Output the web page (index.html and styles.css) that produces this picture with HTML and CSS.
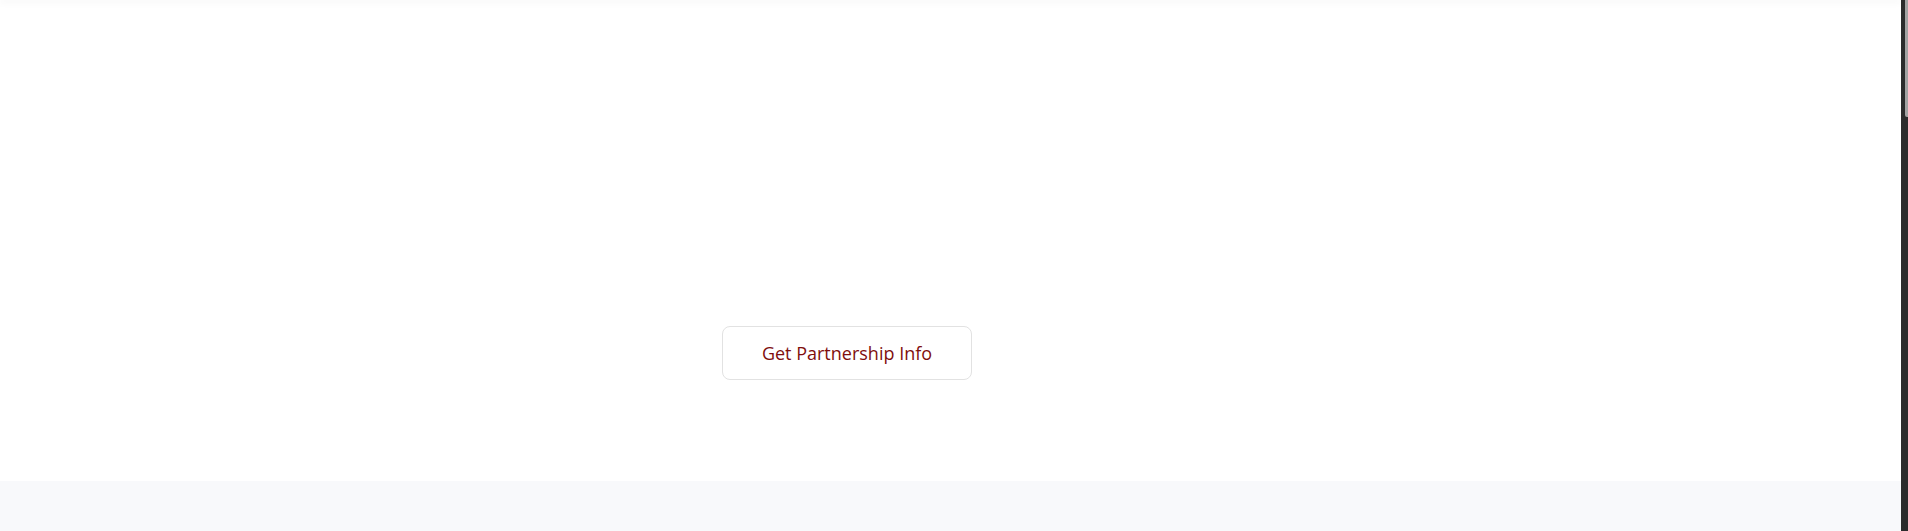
FILE: index.html
```html
<!DOCTYPE html>
<html lang="en">
<head>
<meta charset="utf-8">
<title>Partnership</title>
<link rel="stylesheet" href="styles.css">
</head>
<body>
<div class="frame">
  <div class="page">
    <div class="top-shadow"></div>
    <section class="hero">
      <div class="cta-row">
        <a class="cta" href="#">Get Partnership Info</a>
      </div>
    </section>
    <section class="next"></section>
  </div>
  <div class="scrollbar"><div class="thumb"></div></div>
</div>
</body>
</html>
```
FILE: styles.css
```css
* { box-sizing: border-box; }
html, body { margin: 0; padding: 0; height: 100%; overflow: hidden; }
body { font-family: "Open Sans", "Liberation Sans", sans-serif; background: #fff; }
.frame { display: flex; height: 531px; width: 1908px; }
.page { flex: 1; display: flex; flex-direction: column; background: #fff; }
.top-shadow { height: 0; box-shadow: 0 1px 7px 1px rgba(0,0,0,0.08); position: relative; z-index: 1; }
.hero { height: 481px; padding-top: 326px; }
.cta-row { padding-left: 722px; }
.cta {
  display: flex; align-items: center; justify-content: center;
  width: 250px; height: 54px;
  border: 1px solid #e2e2e2; border-radius: 8px;
  color: #7f0e0e; text-decoration: none;
  font-size: 18px; background: #fff;
}
.next { flex: 1; background: #f8f9fb; }
.scrollbar { width: 7px; background: #2c2c2c; display: flex; justify-content: flex-end; }
.thumb { width: 3px; height: 117px; background: #a3a3a3; border-bottom-left-radius: 2px; }
```
